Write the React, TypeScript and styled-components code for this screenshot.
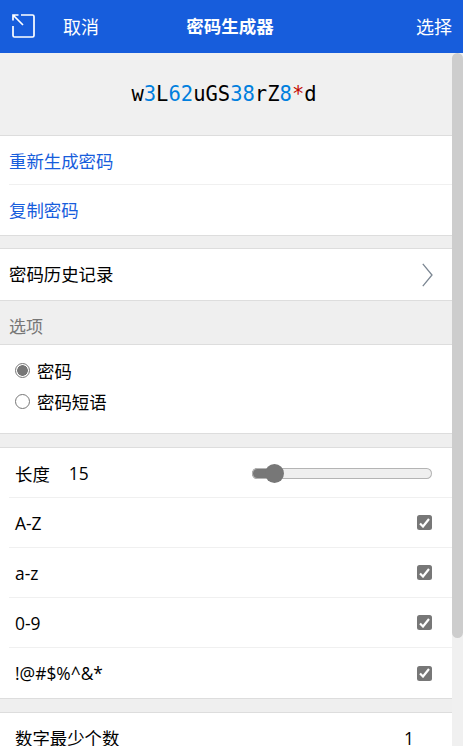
import type { CSSProperties } from 'react'
import styled, { createGlobalStyle } from 'styled-components'

const GlobalStyle = createGlobalStyle`
  html, body {
    margin: 0;
    padding: 0;
    height: 100%;
    overflow: hidden;
  }
  #root {
    height: 100%;
  }
  * {
    box-sizing: border-box;
  }
`

const Page = styled.div`
  display: flex;
  flex-direction: column;
  height: 746px;
  background: #efefef;
  color: #000;
  font-family: 'Open Sans', 'Noto Sans CJK SC', sans-serif;
  font-size: 17.4px;
`

const Header = styled.header`
  flex: none;
  display: grid;
  grid-template-columns: 1fr auto 1fr;
  align-items: center;
  height: 53px;
  padding: 0 11px 2px 12px;
  background: #175ddc;
  color: #fff;
  font-size: 18px;
`

const HeaderLeft = styled.div`
  display: flex;
  align-items: center;
  gap: 28px;
`

const Title = styled.div`
  font-size: 17.5px;
  font-weight: 700;
  transform: translateX(-2px);
`

const HeaderRight = styled.div`
  justify-self: end;
`

const Body = styled.div`
  flex: 1;
  display: flex;
  min-height: 0;
`

const Scroller = styled.main`
  flex: 1;
  min-width: 0;
  overflow: hidden;
`

const ScrollTrack = styled.div`
  flex: none;
  width: 11px;
  background: #f0f0f0;
`

const ScrollThumb = styled.div`
  height: 585px;
  border-radius: 6px;
  background: #cdcdcd;
`

const PasswordPanel = styled.div`
  display: flex;
  align-items: center;
  justify-content: center;
  height: 82px;
  padding: 0 4px 1px 0;
  background: #f0f0f0;
  font-family: 'DejaVu Sans Mono', monospace;
  font-size: 20.5px;
`

const PwdChar = styled.span<{ $kind?: 'num' | 'sym' }>`
  color: ${({ $kind }) => ($kind === 'num' ? '#007fde' : $kind === 'sym' ? '#c40800' : '#000')};
`

const Section = styled.section<{ $gap?: number }>`
  margin-top: ${({ $gap }) => $gap ?? 0}px;
  background: #fff;
  border-top: 1px solid #dddddd;
  border-bottom: 1px solid #dddddd;
`

const Row = styled.div<{ $indent?: number; $height?: number; $link?: boolean }>`
  display: flex;
  align-items: center;
  justify-content: space-between;
  height: ${({ $height }) => $height ?? 50}px;
  margin-left: 9px;
  padding-left: ${({ $indent }) => ($indent ?? 9) - 9}px;
  padding-right: 20px;
  color: ${({ $link }) => ($link ? '#175ddc' : 'inherit')};
  border-bottom: 1px solid #f0f0f0;

  &:last-child {
    border-bottom: 0;
  }
`

const RowText = styled.span<{ $lift?: number }>`
  transform: translateY(${({ $lift }) => $lift ?? 0}px);
`

const LengthGroup = styled.div`
  display: flex;
  gap: 19px;
  transform: translateY(1px);
`

const SectionLabel = styled.div`
  display: flex;
  align-items: center;
  height: 43px;
  padding: 5px 9px 0;
  color: #777;
  font-size: 17px;
`

const RadioList = styled.div`
  display: flex;
  flex-direction: column;
  gap: 7px;
  height: 88px;
  padding: 13px 15px 0;
`

const RadioLabel = styled.label`
  display: flex;
  align-items: center;
  gap: 7px;
  height: 24px;
`

const RadioInput = styled.input.attrs({ type: 'radio', name: 'kind' })`
  appearance: none;
  flex: none;
  width: 15px;
  height: 15px;
  margin: 0;
  border: 1px solid #777;
  border-radius: 50%;
  background: #fff;

  &:checked {
    background: radial-gradient(circle, #777 0, #777 5px, #fff 5.6px);
  }
`

const Slider = styled.input.attrs({ type: 'range' })`
  appearance: none;
  width: 180px;
  height: 11px;
  margin: 1px 0 0;
  border-radius: 6px;
  box-shadow: inset 0 0 0 1px #b4b4b4;
  background: linear-gradient(to right, #777 var(--fill), #efefef var(--fill));

  &::-webkit-slider-thumb {
    appearance: none;
    width: 19px;
    height: 19px;
    border-radius: 50%;
    background: #777;
  }
`

const CheckBox = styled.span`
  display: flex;
  align-items: center;
  justify-content: center;
  width: 15px;
  height: 15px;
  border-radius: 2.5px;
  background: #777;
`

const Count = styled.span`
  margin-right: 18px;
`

const ChevronIcon = styled.svg`
  margin-right: -1px;
`

const password: Array<[string, 'num' | 'sym' | undefined]> = 'w3L62uGS38rZ8*d'.split('').map((c) => [
  c,
  /[0-9]/.test(c) ? 'num' : c === '*' ? 'sym' : undefined,
])

const PopoutIcon = () => (
  <svg width="23" height="24" viewBox="0 0 23 24" fill="none" stroke="#fff" strokeWidth="1.700">
    <path d="M9 1h11.500A1.500 1.500 0 0 1 22 2.500v19a1.500 1.500 0 0 1-1.500 1.500h-18A1.500 1.500 0 0 1 1 21.500V12" />
    <path d="M1.500 1.500l9.500 9.500M1 6.500V1h5.500" />
  </svg>
)

const Chevron = () => (
  <ChevronIcon width="11" height="24" viewBox="0 0 11 24" fill="none" stroke="#7b8692" strokeWidth="1.300">
    <path d="M.8.8L10 12 .8 23.200" />
  </ChevronIcon>
)

const Check = () => (
  <svg width="11" height="10" viewBox="0 0 11 10" fill="none" stroke="#fff" strokeWidth="2.200">
    <path d="M1 5.500l3 3L10 1" />
  </svg>
)

const options = ['A-Z', 'a-z', '0-9', '!@#$%^&*']

const length = 15
const fill = (((length - 5) / 123) * 161 + 9.500) / 180

const App = () => {
  return (
    <Page>
      <GlobalStyle />
      <Header>
        <HeaderLeft>
          <PopoutIcon />
          <span>取消</span>
        </HeaderLeft>
        <Title>密码生成器</Title>
        <HeaderRight>选择</HeaderRight>
      </Header>
      <Body>
        <Scroller>
          <PasswordPanel>
            {password.map(([c, kind], i) => (
              <PwdChar key={i} $kind={kind}>
                {c}
              </PwdChar>
            ))}
          </PasswordPanel>
          <Section>
            <Row $link $height={49}>重新生成密码</Row>
            <Row $link>
              <RowText $lift={-1}>复制密码</RowText>
            </Row>
          </Section>
          <Section $gap={12}>
            <Row $height={51}>
              <RowText $lift={-1}>密码历史记录</RowText>
              <Chevron />
            </Row>
          </Section>
          <SectionLabel>选项</SectionLabel>
          <Section>
            <RadioList>
              <RadioLabel>
                <RadioInput defaultChecked />
                密码
              </RadioLabel>
              <RadioLabel>
                <RadioInput />
                密码短语
              </RadioLabel>
            </RadioList>
          </Section>
          <Section $gap={13}>
            <Row $indent={15}>
              <LengthGroup>
                <span>长度</span>
                <span>{length}</span>
              </LengthGroup>
              <Slider
                min={5}
                max={128}
                defaultValue={length}
                style={{ '--fill': `${fill * 100}%` } as CSSProperties}
              />
            </Row>
            {options.map((o) => (
              <Row key={o} $indent={15}>
                {o}
                <CheckBox>
                  <Check />
                </CheckBox>
              </Row>
            ))}
          </Section>
          <Section $gap={13}>
            <Row $indent={15}>
              数字最少个数
              <Count>1</Count>
            </Row>
            <Row $indent={15}>
              特殊字符最少个数
              <Count>1</Count>
            </Row>
          </Section>
        </Scroller>
        <ScrollTrack>
          <ScrollThumb />
        </ScrollTrack>
      </Body>
    </Page>
  )
}

export default App
